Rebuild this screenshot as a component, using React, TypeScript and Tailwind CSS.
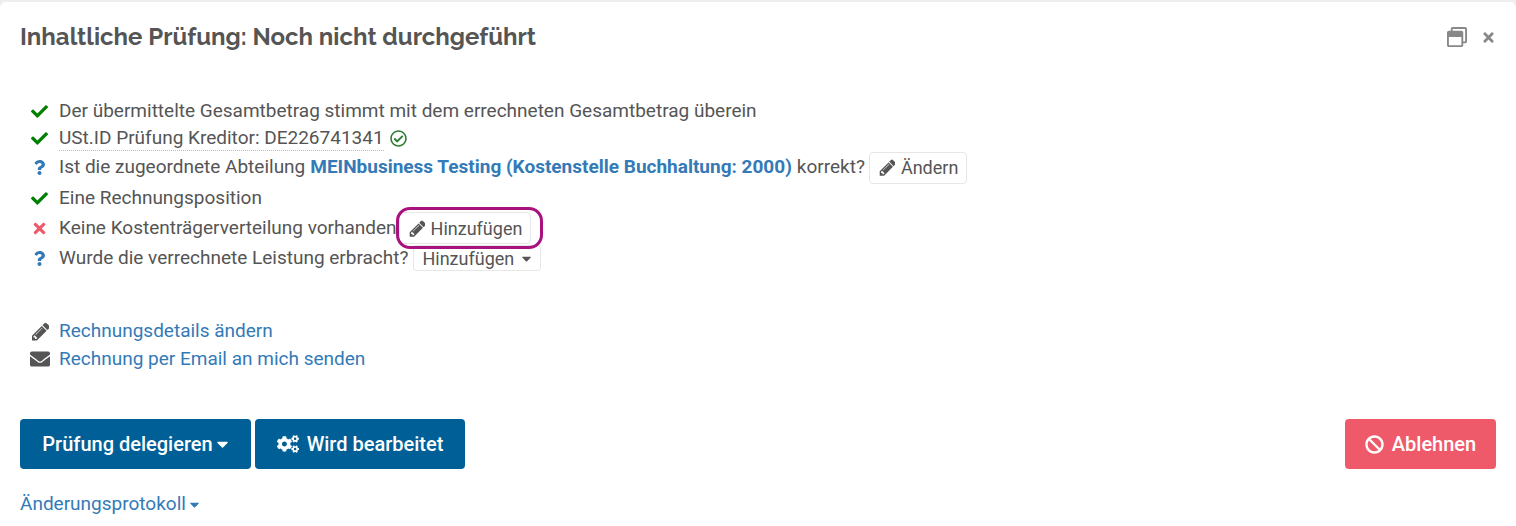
import { FaBan, FaCaretDown, FaCheck, FaCogs, FaEnvelope, FaQuestion, FaRegCheckCircle, FaRegWindowRestore, FaTimes } from "react-icons/fa"
import type { ReactNode } from "react"

const font = "font-['Roboto',sans-serif]"

function Pencil({ className }: { className?: string }) {
  return (
    <svg viewBox="0 0 1536 1792" fill="currentColor" className={className}>
      <path d="M491 1536l91-91-235-235-91 91v107h128v128h107zm523-928q0-22-22-22-10 0-17 7l-542 542q-7 7-7 17 0 22 22 22 10 0 17-7l542-542q7-7 7-17zm-54-192l416 416-832 832h-416v-416zm683 96q0 53-37 90l-166 166-416-416 166-165q36-38 90-38 53 0 91 38l235 234q37 39 37 91z" />
    </svg>
  )
}

function Row({ icon, height, children }: { icon: ReactNode; height: string; children: ReactNode }) {
  return (
    <div className={`flex items-center ${height}`}>
      <span className="flex w-[39px] shrink-0 justify-center">{icon}</span>
      {children}
    </div>
  )
}

const check = <FaCheck className="h-[17px] w-[17px] text-[#008000]" />
const question = <FaQuestion className="h-[15px] w-[15px] text-[#337ab7]" />

export default function App() {
  return (
    <div className={`h-[526px] w-[1516px] overflow-hidden bg-[#eeeeee] pt-[2px] text-[19px] text-[#555555] ${font}`}>
      <div className="flex h-[524px] flex-col rounded-t-[6px] bg-white px-5">
        <div className="flex h-[70px] items-center justify-between">
          <h1 className="font-['Raleway','Lato',sans-serif] text-[24px] font-bold text-[#555555]">
            Inhaltliche Prüfung: Noch nicht durchgeführt
          </h1>
          <div className="flex items-center gap-[14px] text-[#888888]">
            <FaRegWindowRestore className="h-[20px] w-[20px]" />
            <FaTimes className="h-[15px] w-[15px]" />
          </div>
        </div>

        <div className="mt-[25px] flex flex-col">
          <Row icon={check} height="h-[28px]">
            <span>Der übermittelte Gesamtbetrag stimmt mit dem errechneten Gesamtbetrag überein</span>
          </Row>
          <Row icon={check} height="h-[27px]">
            <span className="border-b border-dotted border-[#bbbbbb] leading-[24px]">USt.ID Prüfung Kreditor: DE226741341</span>
            <FaRegCheckCircle className="ml-[6px] h-[17px] w-[17px] text-[#2e7d32]" />
          </Row>
          <Row icon={question} height="h-[31px]">
            <span>Ist die zugeordnete Abteilung </span>
            <span className="ml-[5px] font-bold text-[#337ab7]">MEINbusiness Testing (Kostenstelle Buchhaltung: 2000)</span>
            <span className="ml-[5px]">korrekt?</span>
            <button className="ml-1 flex h-[32px] items-center gap-[6px] rounded-[4px] border border-[#e7e7e7] bg-white pl-2 pr-2 text-[18px] text-[#555555]">
              <Pencil className="h-[19px] w-[17px]" />
              Ändern
            </button>
          </Row>
          <Row icon={check} height="h-[30px]">
            <span>Eine Rechnungsposition</span>
          </Row>
          <Row icon={<FaTimes className="h-[17px] w-[17px] text-[#ee5a6b]" />} height="h-[30px]">
            <span>Keine Kostenträgerverteilung vorhanden</span>
            <span className="relative ml-[2px]">
              <button className="flex h-[32px] items-center gap-[6px] rounded-[4px] border border-[#e7e7e7] bg-white pl-2 pr-2 text-[18px] text-[#555555]">
                <Pencil className="h-[19px] w-[17px]" />
                Hinzufügen
              </button>
              <span className="absolute -left-[3px] -right-[12px] -top-[5px] -bottom-[5px] rounded-[14px] border-[3px] border-[#a8127f]" />
            </span>
          </Row>
          <Row icon={question} height="h-[30px]">
            <span>Wurde die verrechnete Leistung erbracht?</span>
            <button className="ml-[5px] flex h-[26px] items-center gap-[7px] rounded-[3px] border border-[#e7e7e7] bg-white px-2 text-[18px] text-[#555555]">
              Hinzufügen
              <FaCaretDown className="h-[15px] w-[11px]" />
            </button>
          </Row>
        </div>

        <div className="mt-[44px] flex flex-col">
          <Row icon={<Pencil className="h-[21px] w-[19px] text-[#555555]" />} height="h-[28px]">
            <a className="text-[#337ab7]">Rechnungsdetails ändern</a>
          </Row>
          <Row icon={<FaEnvelope className="h-[20px] w-[20px] text-[#555555]" />} height="h-[28px]">
            <a className="text-[#337ab7]">Rechnung per Email an mich senden</a>
          </Row>
        </div>

        <div className="mt-[46px] flex h-[50px] items-stretch text-[20px] font-medium text-white">
          <button className="flex w-[231px] items-center justify-center gap-[3px] rounded-[4px] bg-[#005f96]">
            Prüfung delegieren
            <FaCaretDown className="h-[18px] w-[13px]" />
          </button>
          <button className="ml-1 flex w-[210px] items-center justify-center gap-[8px] rounded-[4px] bg-[#005f96]">
            <FaCogs className="h-[22px] w-[22px]" />
            Wird bearbeitet
          </button>
          <button className="ml-auto flex w-[151px] items-center justify-center gap-[8px] rounded-[4px] bg-[#ef5a6b]">
            <FaBan className="h-[19px] w-[19px]" />
            Ablehnen
          </button>
        </div>

        <a className="mt-[21px] flex items-center gap-[3px] text-[#337ab7]">
          Änderungsprotokoll
          <FaCaretDown className="h-[15px] w-[11px]" />
        </a>
      </div>
    </div>
  )
}
